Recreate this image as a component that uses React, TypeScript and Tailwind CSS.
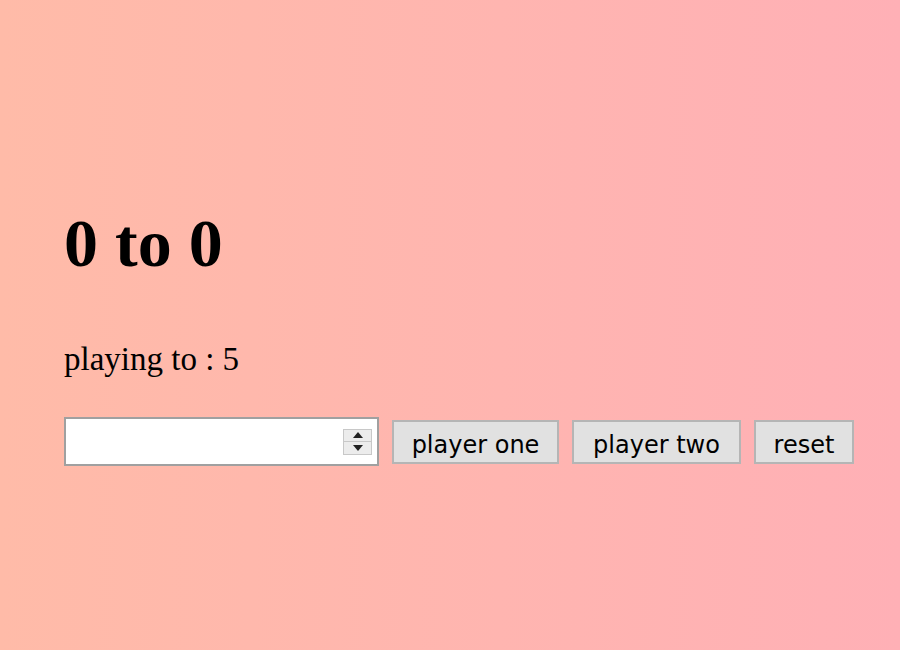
export default function App() {
  return (
    <div className="min-h-[650px] w-full bg-gradient-to-r from-[#ffbba8] to-[#ffb0b6] px-[64px] pt-[205px] font-['Liberation_Serif',serif] text-black">
      <h1 className="text-[68px] leading-[76px] font-bold">0 to 0</h1>
      <p className="mt-[58px] text-[33px] leading-[40px]">playing to : 5</p>
      <div className="mt-[38px] flex items-center gap-[13px] font-['DejaVu_Sans','Liberation_Sans',sans-serif]">
        <div className="flex h-[49px] w-[315px] shrink-0 items-center border-2 border-[#a0a0a0] bg-white pr-[5px]">
          <input type="text" className="h-full min-w-0 flex-1 bg-transparent px-2 text-[22px] outline-none" />
          <div className="flex h-[26px] w-[29px] flex-col border border-[#c8c8c8] bg-[#ececec]">
            <div className="flex flex-1 items-center justify-center border-b border-[#c8c8c8]">
              <svg width="10" height="6" viewBox="0 0 10 6"><path d="M5 0L10 6H0Z" fill="#222" /></svg>
            </div>
            <div className="flex flex-1 items-center justify-center">
              <svg width="10" height="6" viewBox="0 0 10 6"><path d="M0 0H10L5 6Z" fill="#222" /></svg>
            </div>
          </div>
        </div>
        <button className="h-[44px] w-[167px] shrink-0 border-2 border-[#b5b5b5] bg-[#e1e1e1] pt-[5px] text-[24px] text-black">player one</button>
        <button className="h-[44px] w-[169px] shrink-0 border-2 border-[#b5b5b5] bg-[#e1e1e1] pt-[5px] text-[24px] text-black">player two</button>
        <button className="h-[44px] w-[100px] shrink-0 border-2 border-[#b5b5b5] bg-[#e1e1e1] pt-[5px] text-[24px] text-black">reset</button>
      </div>
    </div>
  );
}
